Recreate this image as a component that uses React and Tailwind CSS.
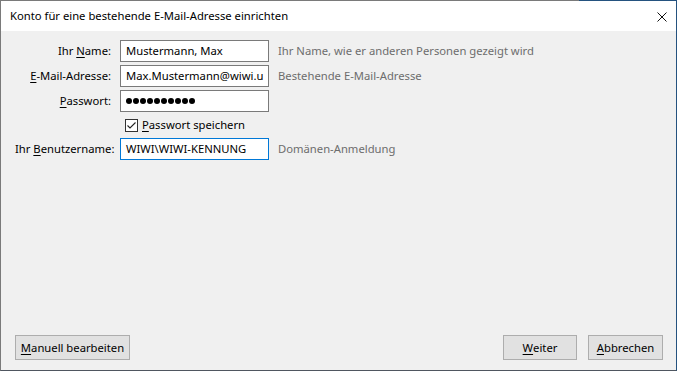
import React from "react";

const U = ({ children }) => <span className="underline underline-offset-[2px] decoration-[1px]">{children}</span>;

function Field({ label, children, hint, focused }) {
  return (
    <div className="flex items-center h-[22px]">
      <div className="w-[96px] text-right whitespace-nowrap text-black">{label}</div>
      <div
        className={
          "ml-[9px] w-[149px] h-[22px] bg-white border flex items-center pl-[5px] overflow-hidden whitespace-nowrap " +
          (focused ? "border-[#0078d7]" : "border-[#7a7a7a]")
        }
      >
        {children}
      </div>
      {hint && <div className="ml-[9px] text-[#6d6d6d] whitespace-nowrap">{hint}</div>}
    </div>
  );
}

function Btn({ children, w }) {
  return (
    <div className={"h-[25px] border border-[#adadad] bg-[#e1e1e1] flex items-center justify-center text-black " + w}>
      {children}
    </div>
  );
}

export default function App() {
  return (
    <div
      className="w-[677px] h-[371px] flex flex-col border-l border-r border-b border-l-[#7a7a7a] border-r-[#24527f] border-b-[#4f5660] text-[11.25px] leading-none"
      style={{ fontFamily: '"Segoe UI", "Noto Sans", sans-serif' }}
    >
      <div className="flex h-px shrink-0">
        <div className="flex-1 bg-[#7a7a7a]" />
        <div className="w-[97px] bg-[#24527f]" />
      </div>
      <div className="h-[30px] shrink-0 bg-white flex items-center justify-between pl-[9px] pr-[9px]">
        <span className="text-black">Konto für eine bestehende E-Mail-Adresse einrichten</span>
        <svg width="10" height="10" viewBox="0 0 10 10" className="mt-[1px]">
          <path d="M0.5 0.5 L9.5 9.5 M9.5 0.5 L0.5 9.5" stroke="#111" strokeWidth="1" fill="none" />
        </svg>
      </div>
      <div className="flex-1 bg-[#f0f0f0] flex flex-col justify-between pl-[14px] pr-[13px] pt-[9px] pb-[10px]">
        <div className="flex flex-col gap-[3px]">
          <Field label={<>Ihr <U>N</U>ame:</>} hint="Ihr Name, wie er anderen Personen gezeigt wird">
            Mustermann, Max
          </Field>
          <Field label={<><U>E</U>-Mail-Adresse:</>} hint="Bestehende E-Mail-Adresse">
            Max.Mustermann@wiwi.u
          </Field>
          <Field label={<><U>P</U>asswort:</>}>
            <div className="flex gap-[1px]">
              {Array.from({ length: 10 }).map((_, i) => (
                <div key={i} className="w-[6px] h-[6px] rounded-full bg-black" />
              ))}
            </div>
          </Field>
          <div className="flex items-center h-[20px] pl-[110px]">
            <div className="w-[13px] h-[13px] border border-[#333] bg-white flex items-center justify-center">
              <svg width="11" height="11" viewBox="0 0 11 11">
                <path d="M1.5 5.5 L4 8 L9.5 2.5" stroke="#222" strokeWidth="1.1" fill="none" />
              </svg>
            </div>
            <span className="ml-[4px] text-black"><U>P</U>asswort speichern</span>
          </div>
          <Field label={<>Ihr <U>B</U>enutzername:</>} hint="Domänen-Anmeldung" focused>
            WIWI\WIWI-KENNUNG
          </Field>
        </div>
        <div className="flex items-center">
          <Btn w="w-[115px]"><U>M</U>anuell bearbeiten</Btn>
          <div className="flex-1" />
          <Btn w="w-[74px]"><U>W</U>eiter</Btn>
          <div className="w-[11px]" />
          <Btn w="w-[75px]"><U>A</U>bbrechen</Btn>
        </div>
      </div>
    </div>
  );
}
